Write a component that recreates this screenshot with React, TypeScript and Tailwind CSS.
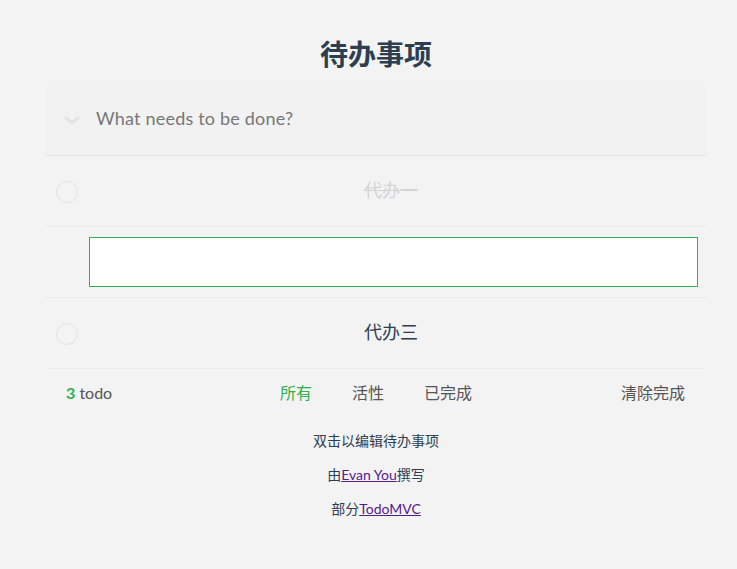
import React from "react";

const font = { fontFamily: 'Lato, "Noto Sans CJK SC", sans-serif' };

function Circle() {
  return <div className="w-[22px] h-[22px] rounded-full border border-[#e3e3e3] shrink-0 mt-[2px]" />;
}

export default function App() {
  return (
    <div className="min-h-[569px] bg-[#f3f3f3] text-[#2c3e50]" style={font}>
      <div className="ml-[46px] w-[660px] pt-[34px]">
        <h1 className="h-[40px] leading-[40px] text-center text-[28px] font-bold text-[#2c3e50] mb-[10px]">待办事项</h1>
        <div className="h-[72px] bg-[#f2f2f2] border-b border-[#e3e3e3] flex items-center">
          <div className="w-[50px] flex justify-center pl-[2px]">
            <svg width="18" height="10" viewBox="0 0 18 10">
              <polyline points="2,2 9,8 16,2" fill="none" stroke="#e4e4e4" strokeWidth="3" />
            </svg>
          </div>
          <span className="text-[18px] tracking-[0.2px] text-[#777] -mt-[2px]">What needs to be done?</span>
        </div>
        <div className="h-[71px] border-b border-[#ebebeb] flex items-center">
          <div className="w-[30px] pl-[10px] flex"><Circle /></div>
          <div className="flex-1 text-center text-[18px] text-[#d4d4d4] line-through -mt-[2px]">代办一</div>
        </div>
        <div className="h-[71px] border-b border-[#ebebeb] pt-[10px] pl-[43px] pr-[8px]">
          <div className="h-[50px] bg-white border border-[#2eb150]" />
        </div>
        <div className="h-[71px] border-b border-[#ebebeb] flex items-center">
          <div className="w-[30px] pl-[10px] flex"><Circle /></div>
          <div className="flex-1 text-center text-[18px] text-[#2c3e50] -mt-[2px]">代办三</div>
        </div>
        <div className="h-[48px] flex items-center text-[16px] text-[#555]">
          <div className="w-[220px] pl-[20px]">
            <span className="font-bold text-[#2eb150]">3</span> todo
          </div>
          <div className="flex gap-[40px]">
            <span className="text-[#2eb150] ml-[14px]">所有</span>
            <span>活性</span>
            <span>已完成</span>
          </div>
          <div className="flex-1 text-right pr-[21px]">清除完成</div>
        </div>
        <div className="mt-[15px] text-[14px] text-[#2c3e50] text-center leading-[18px] flex flex-col gap-[16px]">
          <p>双击以编辑待办事项</p>
          <p>由<a className="underline text-[#551a8b]">Evan You</a>撰写</p>
          <p>部分<a className="underline text-[#551a8b]">TodoMVC</a></p>
        </div>
      </div>
    </div>
  );
}
